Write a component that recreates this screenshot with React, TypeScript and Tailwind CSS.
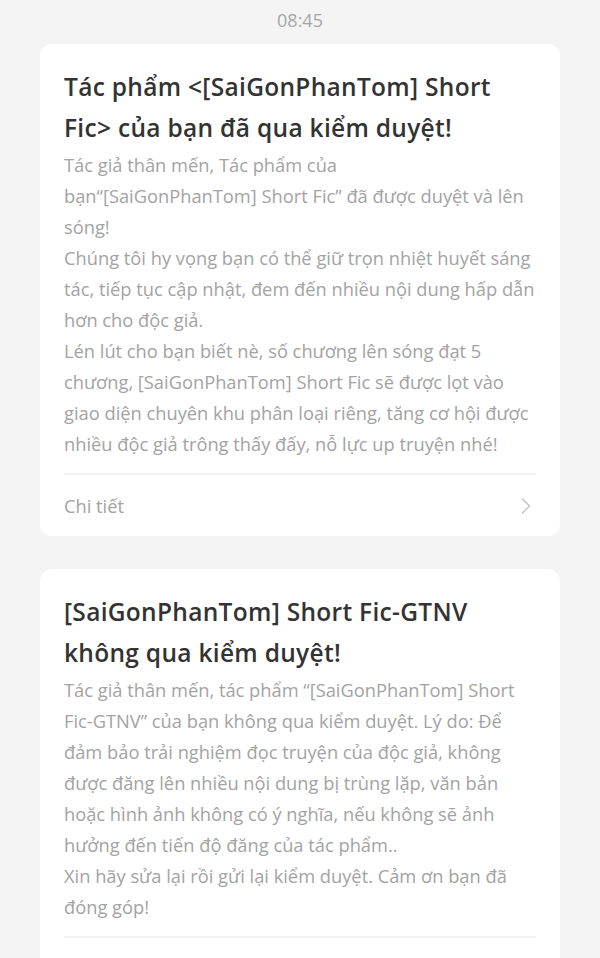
import { ChevronRight } from 'lucide-react';

const Card = ({ title, lines, showFooter }: { title: string[]; lines: string[]; showFooter: boolean }) => {
  return (
    <div className="bg-white rounded-xl mx-10 px-6 pt-[22px]">
      <div className="text-[24.5px] leading-[41px] font-semibold text-[#333333] tracking-[0.3px]">
        {title.map((t, i) => (
          <div key={i} className="whitespace-nowrap">{t}</div>
        ))}
      </div>
      <div className="mt-[1px] text-[18.3px] leading-[31px] text-[#a3a3a3] pb-[14px]">
        {lines.map((l, i) => (
          <div key={i} className="whitespace-nowrap">{l}</div>
        ))}
      </div>
      <div className="border-t-2 border-[#f2f2f2]" />
      {showFooter ? (
        <div className="flex items-center justify-between h-[61px]">
          <span className="text-[18.3px] text-[#a3a3a3]">Chi tiết</span>
          <ChevronRight className="w-7 h-7 text-[#c2c2c2] -mr-1" strokeWidth={1.2} />
        </div>
      ) : (
        <div className="h-[61px]" />
      )}
    </div>
  );
};

export default function App() {
  return (
    <div className="bg-[#f4f4f4] font-['Open_Sans','Noto_Sans',sans-serif] overflow-hidden h-[958px]">
      <div className="text-center text-[18px] text-[#a6a6a6] pt-[7px] h-[44px]">08:45</div>
      <Card
        title={['Tác phẩm <[SaiGonPhanTom] Short', 'Fic> của bạn đã qua kiểm duyệt!']}
        lines={[
          'Tác giả thân mến, Tác phẩm của',
          'bạn“[SaiGonPhanTom] Short Fic” đã được duyệt và lên',
          'sóng!',
          'Chúng tôi hy vọng bạn có thể giữ trọn nhiệt huyết sáng',
          'tác, tiếp tục cập nhật, đem đến nhiều nội dung hấp dẫn',
          'hơn cho độc giả.',
          'Lén lút cho bạn biết nè, số chương lên sóng đạt 5',
          'chương, [SaiGonPhanTom] Short Fic sẽ được lọt vào',
          'giao diện chuyên khu phân loại riêng, tăng cơ hội được',
          'nhiều độc giả trông thấy đấy, nỗ lực up truyện nhé!',
        ]}
        showFooter
      />
      <div className="h-[33px]" />
      <Card
        title={['[SaiGonPhanTom] Short Fic-GTNV', 'không qua kiểm duyệt!']}
        lines={[
          'Tác giả thân mến, tác phẩm “[SaiGonPhanTom] Short',
          'Fic-GTNV” của bạn không qua kiểm duyệt. Lý do: Để',
          'đảm bảo trải nghiệm đọc truyện của độc giả, không',
          'được đăng lên nhiều nội dung bị trùng lặp, văn bản',
          'hoặc hình ảnh không có ý nghĩa, nếu không sẽ ảnh',
          'hưởng đến tiến độ đăng của tác phẩm..',
          'Xin hãy sửa lại rồi gửi lại kiểm duyệt. Cảm ơn bạn đã',
          'đóng góp!',
        ]}
        showFooter={false}
      />
    </div>
  );
}
